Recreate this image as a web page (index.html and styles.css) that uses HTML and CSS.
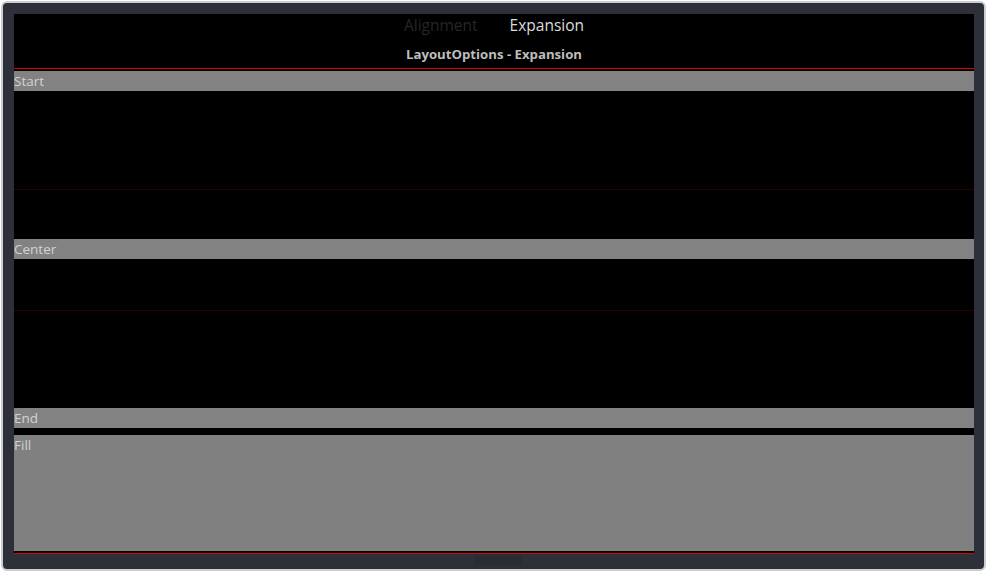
FILE: index.html
```html
<!DOCTYPE html>
<html>
<head>
<meta charset="utf-8">
<link rel="stylesheet" href="styles.css">
</head>
<body>
<div class="window">
  <div class="panel">
    <div class="header">
      <div class="tabs">
        <span class="tab tab-dim">Alignment</span>
        <span class="tab tab-active">Expansion</span>
      </div>
      <div class="title">LayoutOptions - Expansion</div>
    </div>
    <div class="rule-red"></div>
    <div class="content">
      <div class="gap g2"></div>
      <div class="bar">Start</div>
      <div class="gap g98"></div>
      <div class="rule-dark"></div>
      <div class="gap g49"></div>
      <div class="bar">Center</div>
      <div class="gap g51"></div>
      <div class="rule-dark"></div>
      <div class="gap g97"></div>
      <div class="bar">End</div>
      <div class="gap g7"></div>
      <div class="bar fill">Fill</div>
      <div class="gap g2"></div>
    </div>
    <div class="rule-red"></div>
  </div>
  <div class="footer"><div class="grip"></div></div>
</div>
</body>
</html>
```
FILE: styles.css
```css
html, body {
  margin: 0;
  padding: 0;
  background: #ffffff;
}
body {
  font-family: "Open Sans", "Noto Sans", sans-serif;
}
.window {
  box-sizing: border-box;
  margin: 1px 0 0 1px;
  width: 985px;
  height: 570px;
  border: 2px solid #cbcdd0;
  border-radius: 6px;
  background: #2e3039;
  padding: 11px 9px 0 11px;
  display: flex;
  flex-direction: column;
}
.panel {
  background: #000;
  width: 960px;
  height: 540px;
  display: flex;
  flex-direction: column;
}
.header {
  height: 54px;
  display: flex;
  flex-direction: column;
  align-items: center;
}
.tabs {
  display: flex;
  gap: 32px;
  height: 22px;
  align-items: center;
}
.tab {
  font-size: 15.5px;
  line-height: 20px;
}
.tab-dim { color: #262626; }
.tab-active { color: #dcdcdc; }
.title {
  margin-top: 9px;
  font-size: 13.2px;
  font-weight: 700;
  line-height: 18px;
  color: #bdbdbd;
}
.rule-red {
  height: 1px;
  background: #e00000;
}
.content {
  display: flex;
  flex-direction: column;
}
.gap { height: 0; }
.g2 { height: 2px; }
.g7 { height: 7px; }
.g49 { height: 49px; }
.g51 { height: 51px; }
.g97 { height: 97px; }
.g98 { height: 98px; }
.rule-dark {
  height: 1px;
  background: #2a0000;
}
.bar {
  height: 20px;
  background: #828282;
  color: #d2d2d2;
  font-size: 13.5px;
  line-height: 20px;
}
.fill {
  height: 116px;
  background: #808080;
}
.footer {
  height: 14px;
  display: flex;
  justify-content: center;
}
.grip {
  margin-top: 1px;
  margin-left: 6px;
  width: 48px;
  height: 10px;
  background: #2a2c33;
}
```
